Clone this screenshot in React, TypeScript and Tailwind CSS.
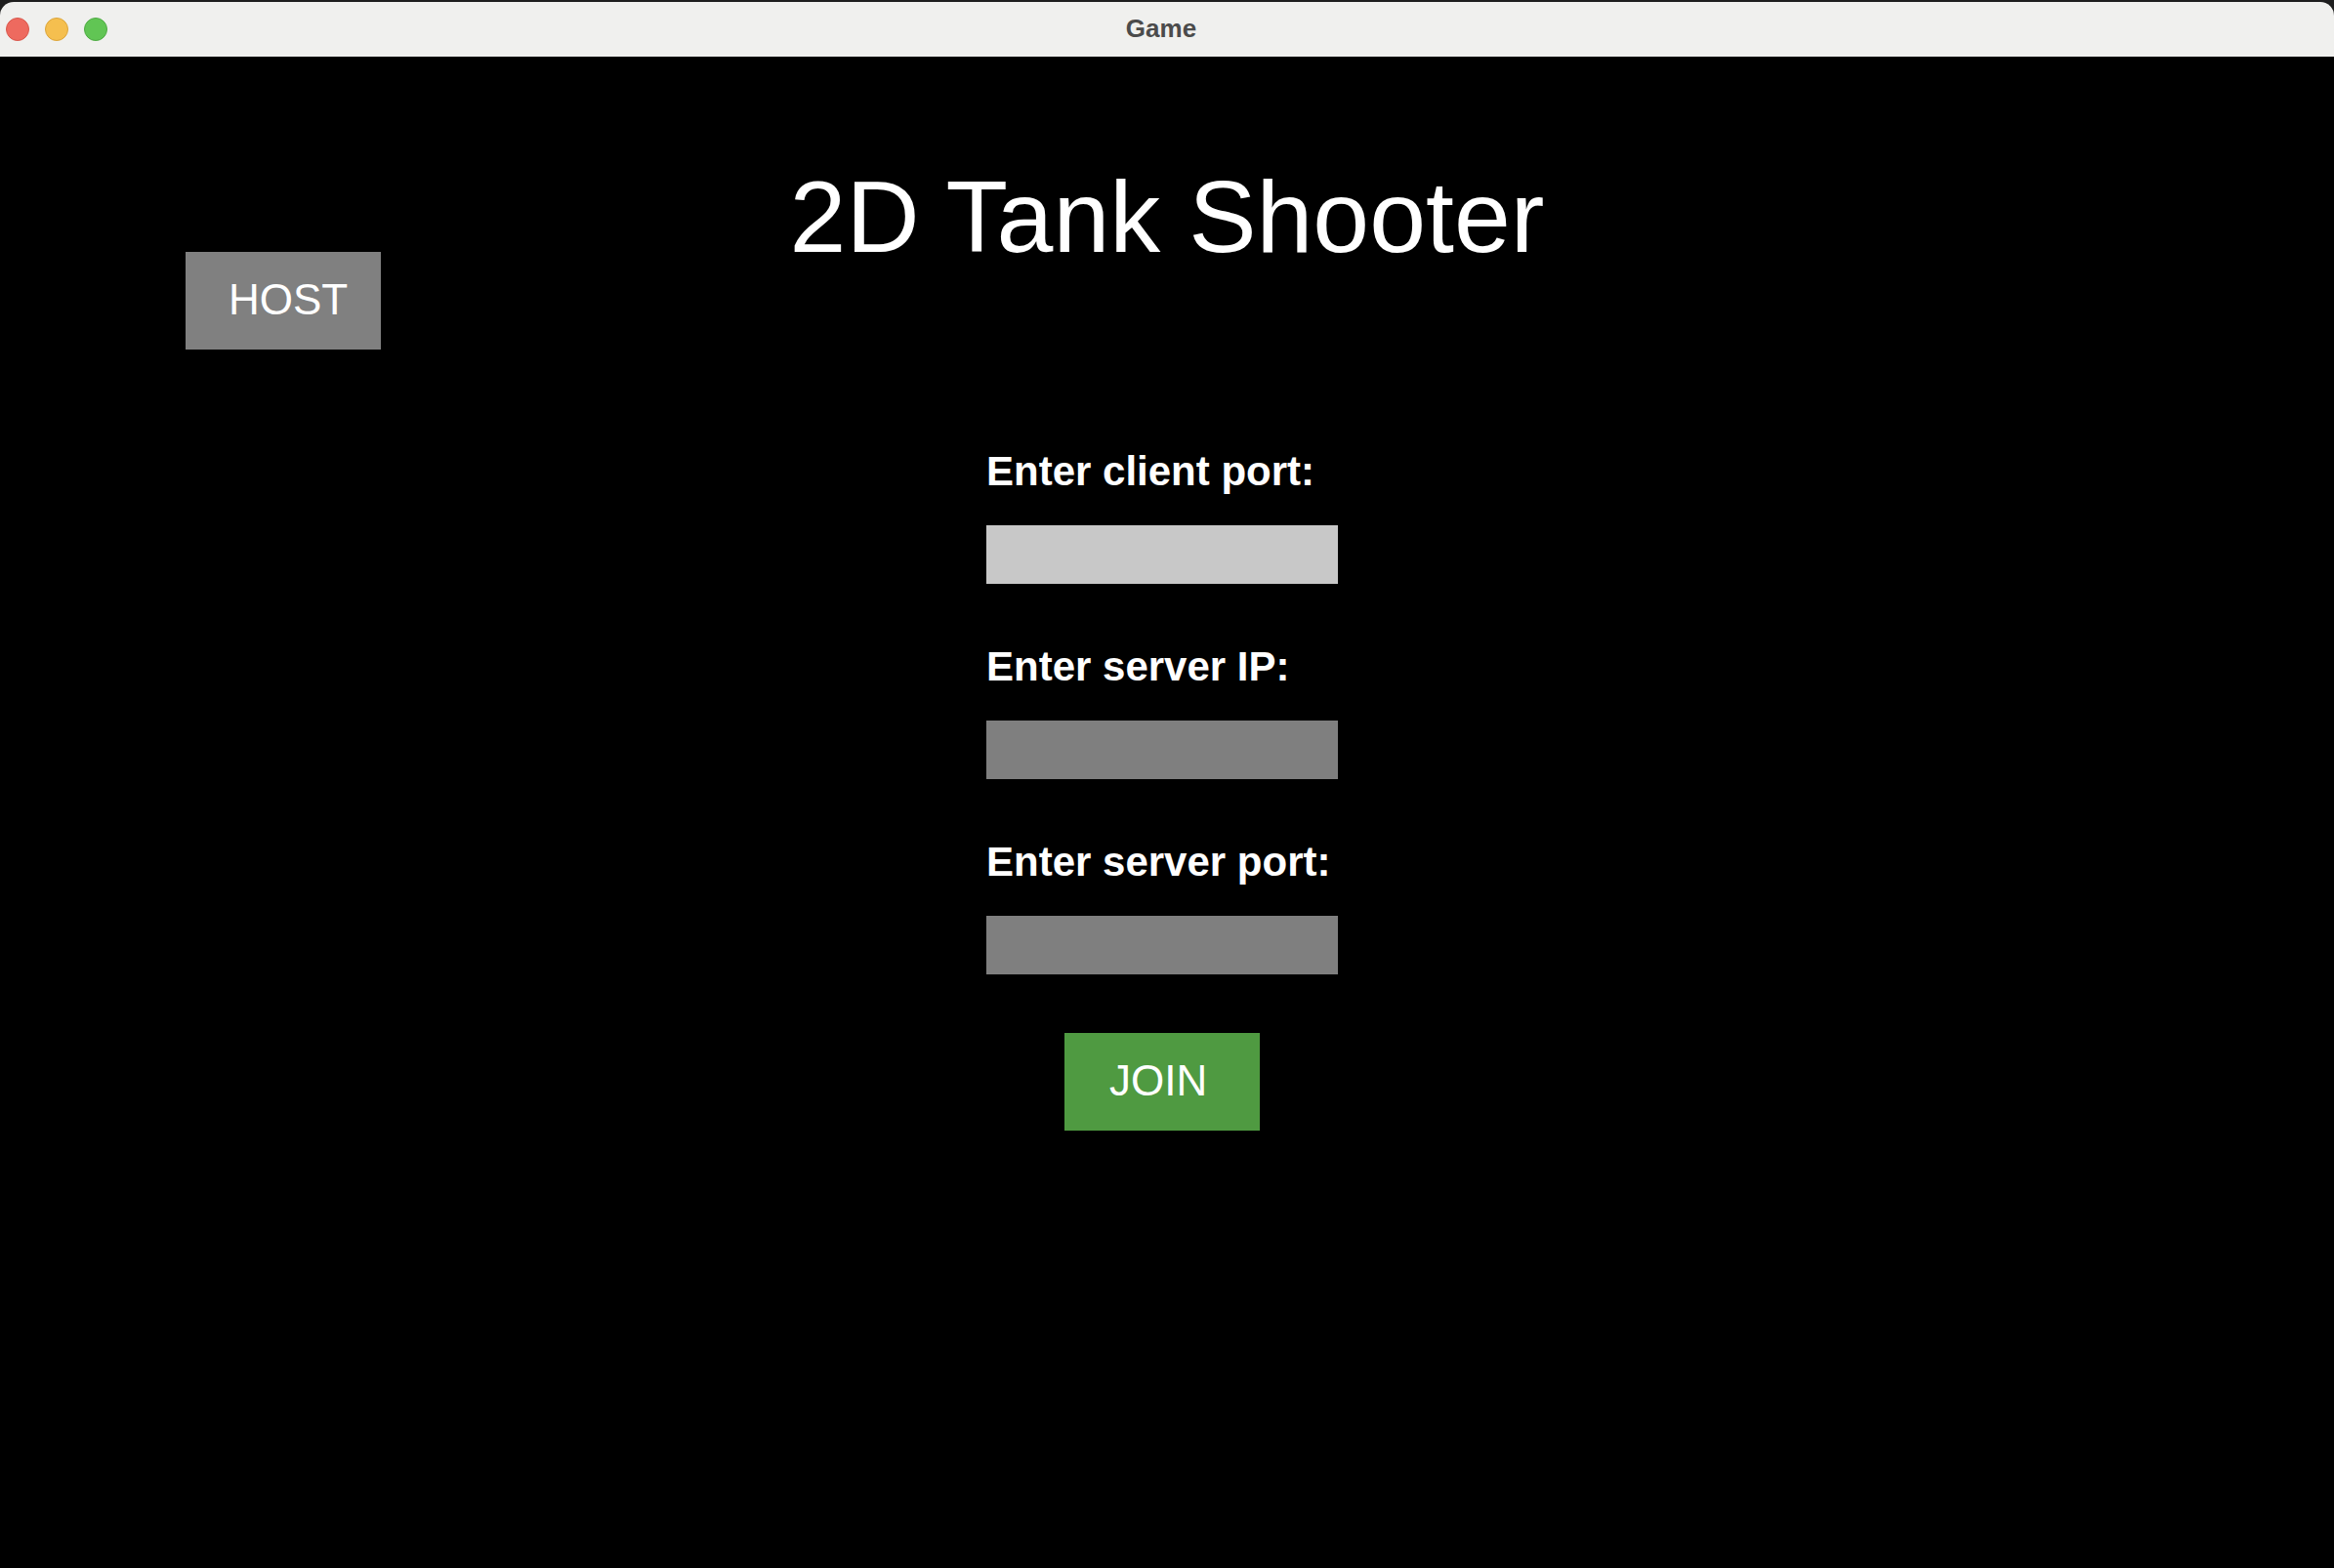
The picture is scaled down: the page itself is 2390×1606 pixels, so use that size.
import React from "react";

const font = { fontFamily: '"Liberation Sans", Arial, sans-serif' };

function Field({ label, light }: { label: string; light?: boolean }) {
  return (
    <div className="flex flex-col">
      <div className="text-[42px] leading-[42px] font-bold text-white whitespace-nowrap">{label}</div>
      <div className={`mt-[34px] w-[360px] h-[60px] ${light ? "bg-[#c8c8c8]" : "bg-[#7f7f7f]"}`} />
    </div>
  );
}

export default function App() {
  return (
    <div className="w-[2390px] h-[1606px] bg-[#1e1e1e] overflow-hidden" style={font}>
      <div className="mt-[2px] w-full h-[1604px] rounded-t-[14px] overflow-hidden bg-black flex flex-col">
        <div className="relative h-[56px] bg-[#f0f0ee] flex items-center justify-center shrink-0">
          <div className="absolute left-[6px] top-[16px] flex gap-[16px]">
            <div className="w-[24px] h-[24px] rounded-full bg-[#ee6a5f] border border-[#d9574c]" />
            <div className="w-[24px] h-[24px] rounded-full bg-[#f5bf4f] border border-[#dca53a]" />
            <div className="w-[24px] h-[24px] rounded-full bg-[#61c554] border border-[#4eab43]" />
          </div>
          <div className="text-[26px] leading-[26px] font-bold text-[#4b4b4b] pr-[12px] mb-[2px]">Game</div>
        </div>
        <div className="flex-1 bg-black flex flex-col">
          <div className="grid grid-cols-[1fr_auto_1fr] mt-[112px]">
            <div className="pt-[88px] pl-[190px]">
              <div className="w-[200px] h-[100px] bg-[#808080] text-white text-[44px] leading-[44px] pt-[27px] pl-[44px]">
                HOST
              </div>
            </div>
            <div className="text-white text-[104px] leading-[104px] whitespace-nowrap">2D Tank Shooter</div>
            <div />
          </div>
          <div className="ml-[1010px] mt-[104px] flex flex-col gap-[64px]">
            <Field label="Enter client port:" light />
            <Field label="Enter server IP:" />
            <Field label="Enter server port:" />
          </div>
          <div className="ml-[1090px] mt-[60px] w-[200px] h-[100px] bg-[#4f9a41] text-white text-[44px] leading-[44px] pt-[27px] pl-[46px]">
            JOIN
          </div>
        </div>
      </div>
    </div>
  );
}
